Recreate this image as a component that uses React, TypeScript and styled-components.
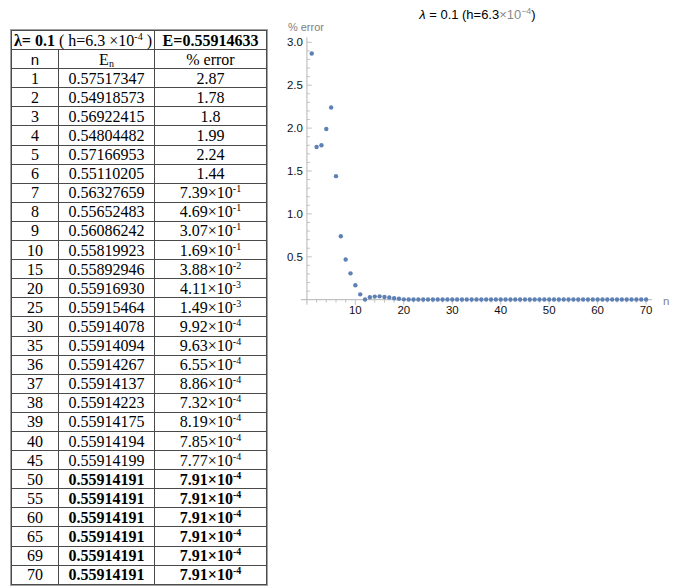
import React from 'react'
import styled, { createGlobalStyle } from 'styled-components'

const GlobalStyle = createGlobalStyle`
  html, body {
    margin: 0;
    padding: 0;
    background: #fff;
  }
  body {
    font-family: 'Liberation Serif', 'Times New Roman', serif;
  }
`

const Page = styled.div`
  display: flex;
  align-items: flex-start;
  width: 684px;
  height: 588px;
  overflow: hidden;
`

const TableWrap = styled.div`
  margin: 29px 0 0 10px;
  border: 1px solid #a2a2a2;
`

const DataTable = styled.table`
  border-collapse: collapse;
  table-layout: fixed;
  width: 255px;
  font-family: 'Liberation Serif', 'Times New Roman', serif;
  font-size: 16px;
  color: #000;
`

const Row = styled.tr`
  height: 19.1px;
`

const Cell = styled.td<{ $bold?: boolean; $sans?: boolean }>`
  border: 1px solid #4a4a4a;
  padding: 0;
  text-align: center;
  line-height: 17px;
  white-space: nowrap;
  font-weight: ${(p) => (p.$bold ? 'bold' : 'normal')};
  font-family: ${(p) => (p.$sans ? "'Liberation Sans', Arial, sans-serif" : 'inherit')};
  font-size: ${(p) => (p.$sans ? '15px' : '16px')};
`

const Exp = styled.sup`
  font-size: 10px;
  vertical-align: 6px;
  line-height: 0;
`

const Sub = styled.sub`
  font-size: 10px;
  vertical-align: -2px;
  line-height: 0;
`

const Chart = styled.svg`
  display: block;
  margin-left: 3px;
  font-family: 'Liberation Sans', Arial, sans-serif;
`

type DataRow = { n: number; e: string; err: string; exp?: string; bold?: boolean }

const rows: DataRow[] = [
  { n: 1, e: '0.57517347', err: '2.87' },
  { n: 2, e: '0.54918573', err: '1.78' },
  { n: 3, e: '0.56922415', err: '1.8' },
  { n: 4, e: '0.54804482', err: '1.99' },
  { n: 5, e: '0.57166953', err: '2.24' },
  { n: 6, e: '0.55110205', err: '1.44' },
  { n: 7, e: '0.56327659', err: '7.39', exp: '-1' },
  { n: 8, e: '0.55652483', err: '4.69', exp: '-1' },
  { n: 9, e: '0.56086242', err: '3.07', exp: '-1' },
  { n: 10, e: '0.55819923', err: '1.69', exp: '-1' },
  { n: 15, e: '0.55892946', err: '3.88', exp: '-2' },
  { n: 20, e: '0.55916930', err: '4.11', exp: '-3' },
  { n: 25, e: '0.55915464', err: '1.49', exp: '-3' },
  { n: 30, e: '0.55914078', err: '9.92', exp: '-4' },
  { n: 35, e: '0.55914094', err: '9.63', exp: '-4' },
  { n: 36, e: '0.55914267', err: '6.55', exp: '-4' },
  { n: 37, e: '0.55914137', err: '8.86', exp: '-4' },
  { n: 38, e: '0.55914223', err: '7.32', exp: '-4' },
  { n: 39, e: '0.55914175', err: '8.19', exp: '-4' },
  { n: 40, e: '0.55914194', err: '7.85', exp: '-4' },
  { n: 45, e: '0.55914199', err: '7.77', exp: '-4' },
  ...[50, 55, 60, 65, 69, 70].map((n) => ({
    n,
    e: '0.55914191',
    err: '7.91',
    exp: '-4',
    bold: true,
  })),
]

// % error for n = 1..20, the rest sit on the axis
const head = [
  2.87, 1.78, 1.8, 1.99, 2.24, 1.44, 0.739, 0.469, 0.307, 0.169, 0.062, 0.003, 0.028, 0.036,
  0.039, 0.032, 0.026, 0.017, 0.011, 0.0041,
]
const errors = Array.from({ length: 70 }, (_, i) => (i < 20 ? head[i] : 0.0015))

const X0 = 306
const Y0 = 300
const xs = (n: number) => X0 + n * 4.857
const ys = (v: number) => Y0 - v * 86

const AXIS = '#b4b4b4'
const DOT = '#5e81b5'

const ErrorPlot = () => {
  const yTicks = Array.from({ length: 30 }, (_, i) => (i + 1) / 10)
  const xTicks = Array.from({ length: 35 }, (_, i) => (i + 1) * 2)
  return (
    <Chart width={414} height={340} viewBox="270 0 414 340">
      <text x={477} y={19} fontSize={13} textAnchor="middle" fill="#000">
        <tspan fontStyle="italic">λ</tspan> = 0.1 (h=6.3
        <tspan fill="#8a8a8a">×10</tspan>
        <tspan fill="#8a8a8a" fontSize={9} dy={-5}>
          −4
        </tspan>
        <tspan dy={5}>)</tspan>
      </text>
      <text x={287} y={31} fontSize={11} fill="#808080">
        % error
      </text>

      <line x1={X0} y1={37} x2={X0} y2={305} stroke={AXIS} strokeWidth={1} />
      <line x1={300} y1={Y0} x2={652} y2={Y0} stroke={AXIS} strokeWidth={1} />

      {yTicks.map((v) => {
        const major = Math.round(v * 10) % 5 === 0
        const y = ys(v)
        return (
          <g key={v}>
            <line x1={X0} y1={y} x2={X0 + (major ? 5 : 3)} y2={y} stroke={AXIS} strokeWidth={0.8} />
            {major && (
              <text x={302} y={y + 4} fontSize={11.5} textAnchor="end" fill="#111">
                {v.toFixed(1)}
              </text>
            )}
          </g>
        )
      })}

      {xTicks.map((n) => {
        const major = n % 10 === 0
        const x = xs(n)
        return (
          <g key={n}>
            <line x1={x} y1={Y0} x2={x} y2={Y0 + (major ? 5 : 3)} stroke={AXIS} strokeWidth={0.8} />
            {major && (
              <text x={x} y={314} fontSize={11.5} textAnchor="middle" fill="#111">
                {n}
              </text>
            )}
          </g>
        )
      })}
      <text x={663} y={305} fontSize={11.5} fill="#808080">
        n
      </text>

      {errors.map((v, i) => (
        <circle key={i} cx={xs(i + 1)} cy={ys(v)} r={2.2} fill={DOT} />
      ))}
    </Chart>
  )
}

export default function App() {
  return (
    <Page>
      <GlobalStyle />
      <TableWrap>
        <DataTable>
          <colgroup>
            <col style={{ width: 47 }} />
            <col style={{ width: 96 }} />
            <col style={{ width: 112 }} />
          </colgroup>
          <tbody>
            <Row>
              <Cell colSpan={2}>
                <b>λ= 0.1</b> ( h=6.3 ×10<Exp>-4</Exp> )
              </Cell>
              <Cell $bold>E=0.55914633</Cell>
            </Row>
            <Row>
              <Cell $sans>n</Cell>
              <Cell>
                E<Sub>n</Sub>
              </Cell>
              <Cell>% error</Cell>
            </Row>
            {rows.map((r) => (
              <Row key={r.n}>
                <Cell>{r.n}</Cell>
                <Cell $bold={r.bold}>{r.e}</Cell>
                <Cell $bold={r.bold}>
                  {r.err}
                  {r.exp && (
                    <>
                      ×10<Exp>{r.exp}</Exp>
                    </>
                  )}
                </Cell>
              </Row>
            ))}
          </tbody>
        </DataTable>
      </TableWrap>
      <ErrorPlot />
    </Page>
  )
}
